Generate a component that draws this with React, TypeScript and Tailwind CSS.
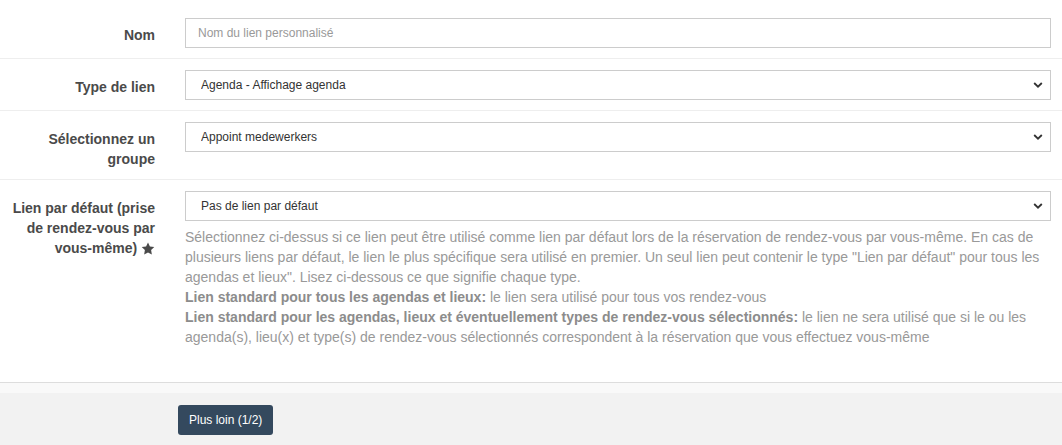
import React from 'react';

const font = { fontFamily: '"Liberation Sans", Arial, sans-serif' };

function Chevron() {
  return (
    <svg className="pointer-events-none absolute right-[8px] top-1/2 -translate-y-1/2" width="10" height="7" viewBox="0 0 10 7">
      <path d="M1.2 1.5 L5 5.2 L8.8 1.5" fill="none" stroke="#333" strokeWidth="1.8" />
    </svg>
  );
}

function Select({ value }: { value: string }) {
  return (
    <div className="relative">
      <select
        defaultValue={value}
        className="block h-[30px] w-full appearance-none border border-[#cccccc] bg-white pl-[15px] pr-8 text-[12px] text-[#333] outline-none"
      >
        <option>{value}</option>
      </select>
      <Chevron />
    </div>
  );
}

function Row({ label, children, last }: { label: React.ReactNode; children: React.ReactNode; last?: boolean }) {
  return (
    <div className={`grid grid-cols-[155px_1fr] gap-x-[30px] pr-[11px] pt-[11px] ${last ? 'pb-[35px]' : 'pb-[10px] border-b border-[#eeeeee]'}`}>
      <label className="pt-[7px] text-right text-[14px] font-bold leading-[20px] text-[#4a4a4a]">{label}</label>
      <div>{children}</div>
    </div>
  );
}

export default function App() {
  return (
    <div className="w-[1062px] h-[445px] bg-white overflow-hidden" style={font}>
      <div className="pt-[7px]">
        <Row label="Nom">
          <input
            placeholder="Nom du lien personnalisé"
            className="block h-[30px] w-full border border-[#cccccc] bg-white px-[12px] text-[12px] text-[#333] outline-none placeholder:text-[#999]"
          />
        </Row>
        <Row label="Type de lien">
          <Select value="Agenda - Affichage agenda" />
        </Row>
        <Row label="Sélectionnez un groupe">
          <Select value="Appoint medewerkers" />
        </Row>
        <Row
          last
          label={
            <>
              Lien par défaut (prise de rendez-vous par vous-même){' '}
              <svg className="inline-block align-[-2px]" width="14" height="13" viewBox="0 0 24 23">
                <path d="M12 0.8l3.4 7 7.7 1.1-5.6 5.4 1.3 7.7L12 18.4l-6.8 3.6 1.3-7.7L0.9 8.9l7.7-1.1z" fill="#4a4a4a" />
              </svg>
            </>
          }
        >
          <Select value="Pas de lien par défaut" />
          <p className="mt-[6px] text-[14px] leading-[20px] text-[#999999]">
            Sélectionnez ci-dessus si ce lien peut être utilisé comme lien par défaut lors de la réservation de rendez-vous par vous-même. En cas de plusieurs liens par défaut, le lien le plus spécifique sera utilisé en premier. Un seul lien peut contenir le type "Lien par défaut" pour tous les agendas et lieux". Lisez ci-dessous ce que signifie chaque type.
            <br />
            <b className="text-[#8c8c8c]">Lien standard pour tous les agendas et lieux:</b> le lien sera utilisé pour tous vos rendez-vous
            <br />
            <b className="text-[#8c8c8c]">Lien standard pour les agendas, lieux et éventuellement types de rendez-vous sélectionnés:</b> le lien ne sera utilisé que si le ou les agenda(s), lieu(x) et type(s) de rendez-vous sélectionnés correspondent à la réservation que vous effectuez vous-même
          </p>
        </Row>
      </div>
      <div className="border-t border-[#dddddd]">
        <div className="h-[10px] bg-[#f9f9f9]" />
        <div className="h-[70px] bg-[#f2f2f2] pl-[178px] pt-[12px]">
          <button className="h-[30px] rounded-[3px] bg-[#34495e] px-[11px] text-[12px] text-white">Plus loin (1/2)</button>
        </div>
      </div>
    </div>
  );
}
